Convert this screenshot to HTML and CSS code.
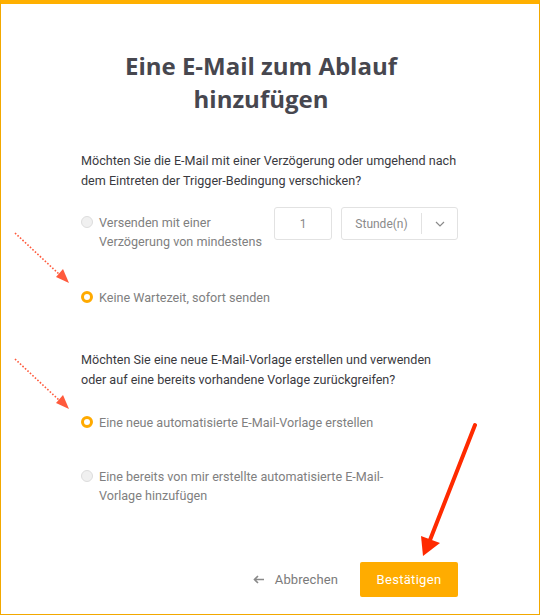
FILE: index.html
```html
<!DOCTYPE html>
<html lang="de">
<head>
<meta charset="utf-8">
<title>Eine E-Mail zum Ablauf hinzufügen</title>
<link rel="stylesheet" href="styles.css">
</head>
<body>
<div class="frame">
  <div class="content">
    <h1 class="title">Eine E-Mail zum Ablauf hinzufügen</h1>

    <p class="question q1">Möchten Sie die E-Mail mit einer Verzögerung oder umgehend nach dem Eintreten der Trigger-Bedingung verschicken?</p>

    <div class="delay-row">
      <label class="radio disabled delay-label">
        <span class="dot"></span>
        <span class="radio-text">Versenden mit einer<br>Verzögerung von mindestens</span>
      </label>
      <div class="num-input">1</div>
      <div class="select">
        <span class="select-value">Stunde(n)</span>
        <span class="select-arrow">
          <svg width="10" height="6" viewBox="0 0 10 6"><path d="M1 1l4 4 4-4" fill="none" stroke="#8a8a8a" stroke-width="1.2"/></svg>
        </span>
      </div>
    </div>

    <label class="radio checked r2">
      <span class="dot"></span>
      <span class="radio-text">Keine Wartezeit, sofort senden</span>
    </label>

    <p class="question q2">Möchten Sie eine neue E-Mail-Vorlage erstellen und verwenden oder auf eine bereits vorhandene Vorlage zurückgreifen?</p>

    <label class="radio checked r3">
      <span class="dot"></span>
      <span class="radio-text">Eine neue automatisierte E-Mail-Vorlage erstellen</span>
    </label>

    <label class="radio disabled r4">
      <span class="dot"></span>
      <span class="radio-text">Eine bereits von mir erstellte automatisierte E-Mail-<br>Vorlage hinzufügen</span>
    </label>

    <div class="actions">
      <span class="cancel">
        <svg class="cancel-arrow" width="11" height="9" viewBox="0 0 11 9"><path d="M11 4.5H2M5 1L1.5 4.5 5 8" fill="none" stroke="#8a8a8a" stroke-width="1.6"/></svg>
        Abbrechen
      </span>
      <span class="confirm">Bestätigen</span>
    </div>
  </div>

  <svg class="annotations" width="540" height="615" viewBox="0 0 540 615">
    <g stroke="#ff5a3c" stroke-width="1.6" stroke-dasharray="1.6 1.8" fill="none">
      <line x1="15" y1="233" x2="60" y2="275"/>
      <line x1="15" y1="359" x2="60" y2="401"/>
    </g>
    <g fill="#ff5a3c">
      <polygon points="69,283 56,277 63,269"/>
      <polygon points="69,409 56,403 63,395"/>
    </g>
    <line x1="475" y1="425" x2="430" y2="540" stroke="#ff2a00" stroke-width="4" stroke-linecap="round"/>
    <polygon points="423,556 421,536 440,543" fill="#ff2a00"/>
  </svg>
</div>
</body>
</html>
```

FILE: styles.css
```css
html, body {
  margin: 0;
  padding: 0;
  background: #ffffff;
}

.frame {
  position: relative;
  width: 540px;
  height: 615px;
  box-sizing: border-box;
  border: 1px solid #f2a800;
  border-top: 4px solid #ffb000;
  background: #ffffff;
  overflow: hidden;
}

.content {
  padding: 45px 0 0 80px;
  width: 377px;
  display: flex;
  flex-direction: column;
  align-items: flex-start;
}

.title {
  width: 360px;
  margin: 0;
  text-align: center;
  font-family: "Open Sans", sans-serif;
  font-weight: 700;
  font-size: 24px;
  line-height: 33px;
  color: #47474f;
}

.question {
  margin: 0;
  font-family: Roboto, sans-serif;
  font-size: 12.6px;
  line-height: 20px;
  color: #3a3a3f;
}

.q1 { margin-top: 36px; }
.q2 { margin-top: 43px; }

.radio {
  display: flex;
  align-items: flex-start;
  font-family: Roboto, sans-serif;
  font-size: 12.6px;
  line-height: 19px;
  color: #808080;
}

.dot {
  flex: none;
  width: 12px;
  height: 12px;
  box-sizing: border-box;
  border-radius: 50%;
  margin: 3px 6px 0 0;
}

.radio.disabled .dot {
  background: #f0f0f0;
  border: 1px solid #dddddd;
}

.radio.checked .dot {
  background: #ffffff;
  border: 3px solid #ffaa00;
}

.delay-row {
  margin-top: 16px;
  display: flex;
  align-items: flex-start;
}

.delay-label {
  width: 193px;
  padding-top: 6px;
}

.num-input {
  width: 58px;
  height: 33px;
  box-sizing: border-box;
  border: 1px solid #e2e2e2;
  border-radius: 3px;
  font-family: Roboto, sans-serif;
  font-size: 12px;
  color: #8a8a8a;
  display: flex;
  align-items: center;
  justify-content: center;
}

.select {
  margin-left: 9px;
  width: 117px;
  height: 33px;
  box-sizing: border-box;
  border: 1px solid #e2e2e2;
  border-radius: 3px;
  display: flex;
  align-items: center;
}

.select-value {
  width: 79px;
  text-align: center;
  font-family: Roboto, sans-serif;
  font-size: 12px;
  color: #8a8a8a;
}

.select-arrow {
  flex: 1;
  height: 21px;
  border-left: 1px solid #e2e2e2;
  display: flex;
  align-items: center;
  justify-content: center;
}

.r2 { margin-top: 37px; }
.r3 { margin-top: 23px; }
.r4 { margin-top: 35px; }

.actions {
  align-self: stretch;
  margin-top: 57px;
  display: flex;
  justify-content: flex-end;
  align-items: center;
}

.cancel {
  font-family: Roboto, sans-serif;
  font-size: 13px;
  letter-spacing: 0.1px;
  color: #7a7a7a;
  display: flex;
  align-items: center;
  margin-right: 22px;
}

.cancel-arrow {
  margin-right: 11px;
}

.confirm {
  width: 98px;
  height: 35px;
  border-radius: 2px;
  background: #ffac00;
  color: #ffffff;
  font-family: Roboto, sans-serif;
  font-size: 13px;
  letter-spacing: 0.3px;
  display: flex;
  align-items: center;
  justify-content: center;
}

.annotations {
  position: absolute;
  left: -1px;
  top: -4px;
  pointer-events: none;
}
```
